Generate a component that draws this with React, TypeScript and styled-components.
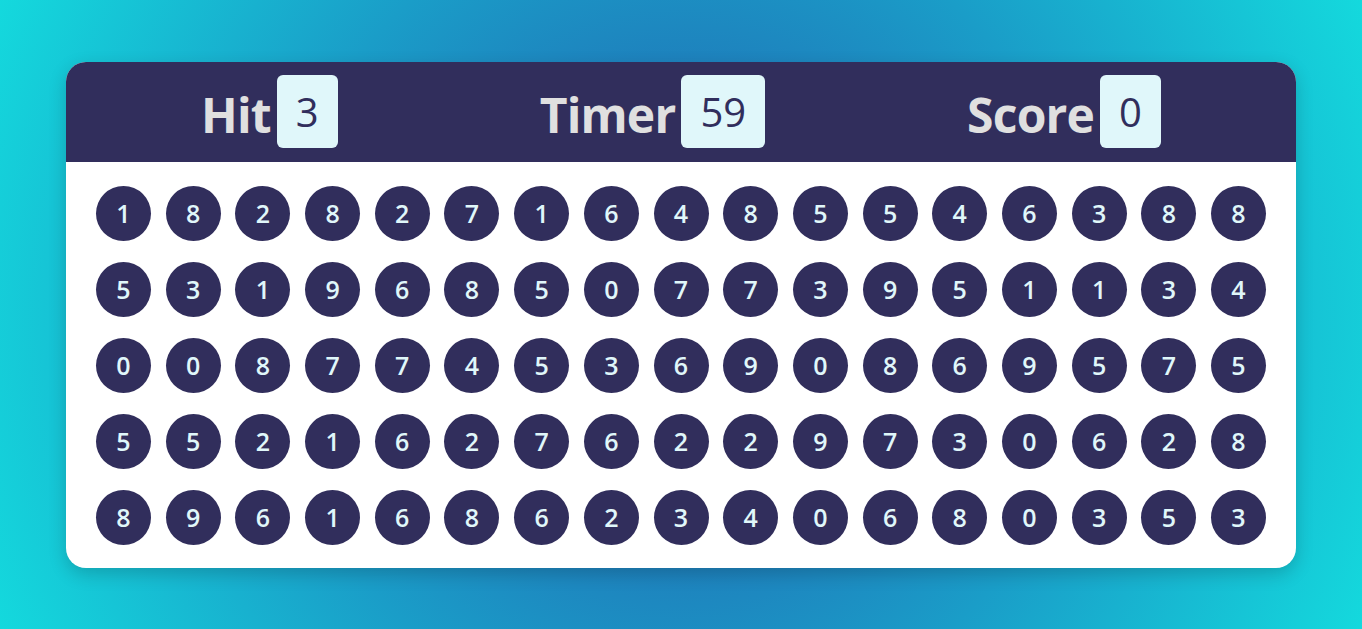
import styled, { createGlobalStyle } from "styled-components";

const GlobalStyle = createGlobalStyle`
  * {
    margin: 0;
    padding: 0;
    box-sizing: border-box;
  }
  body {
    font-family: "Open Sans", "Noto Sans", sans-serif;
  }
`;

// fundo com degradê radial
const Page = styled.div`
  width: 100vw;
  height: 100vh;
  display: flex;
  align-items: center;
  justify-content: center;
  background: radial-gradient(circle farthest-corner at center, #2458ad 0%, #1a9dc8 55%, #14d9dd 100%);
`;

const Card = styled.div`
  width: 1230px;
  border-radius: 20px;
  overflow: hidden;
  background: #ffffff;
  box-shadow: 0 6px 18px rgba(0, 0, 0, 0.18);
`;

const Header = styled.div`
  height: 100px;
  background: #312e5c;
  display: flex;
  align-items: center;
  justify-content: space-around;
  padding: 0 34px;
`;

const Stat = styled.div`
  display: flex;
  align-items: center;
  gap: 6px;
`;

const Label = styled.h2`
  font-size: 48px;
  font-weight: 700;
  color: #e0e0e0;
  line-height: 1;
  letter-spacing: -0.8px;
  margin-top: 6px;
`;

const Value = styled.div`
  height: 73px;
  padding: 0 19px;
  display: flex;
  align-items: center;
  justify-content: center;
  background: #e0f7fa;
  border-radius: 6px;
  color: #312e5c;
  font-size: 40px;
  font-weight: 500;
`;

const Board = styled.div`
  display: grid;
  grid-template-columns: repeat(17, 55px);
  justify-content: space-between;
  row-gap: 21px;
  padding: 24px 30px 23px;
`;

const Bubble = styled.div`
  width: 55px;
  height: 55px;
  border-radius: 50%;
  background: #312e5c;
  color: #e0f7fa;
  display: flex;
  align-items: center;
  justify-content: center;
  font-size: 25px;
  font-weight: 600;
`;

const rows = [
  "18282716485546388",
  "53196850773951134",
  "00877453690869575",
  "55216276229730628",
  "89616862340680353",
];

const App = () => {
  const bubbles = rows.join("").split("");
  return (
    <>
      <GlobalStyle />
      <Page>
        <Card>
          <Header>
            <Stat>
              <Label>Hit</Label>
              <Value>3</Value>
            </Stat>
            <Stat>
              <Label>Timer</Label>
              <Value>59</Value>
            </Stat>
            <Stat>
              <Label>Score</Label>
              <Value>0</Value>
            </Stat>
          </Header>
          <Board>
            {bubbles.map((n, i) => (
              <Bubble key={i}>{n}</Bubble>
            ))}
          </Board>
        </Card>
      </Page>
    </>
  );
};

export default App;
